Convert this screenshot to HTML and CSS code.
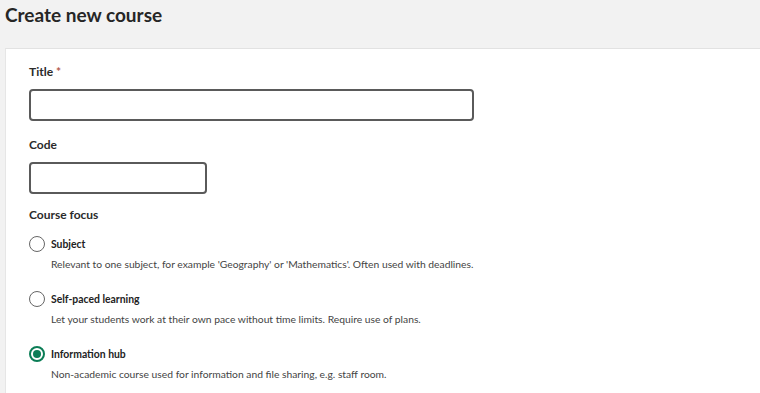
FILE: index.html
```html
<!DOCTYPE html>
<html lang="en">
<head>
    <meta charset="UTF-8">
    <title>Create new course</title>
    <link rel="stylesheet" href="styles.css">
</head>
<body>

<h1 class="page-title">Create new course</h1>

<div class="card">
    <div class="field">
        <label for="title" class="field-label">Title <span class="req">*</span></label>
        <input type="text" id="title" class="input-wide">
    </div>

    <div class="field">
        <label for="code" class="field-label">Code</label>
        <input type="text" id="code" class="input-short">
    </div>

    <div class="field-label focus-label">Course focus</div>

    <div class="radio-list">
        <label class="radio-item">
            <span class="radio"></span>
            <span class="radio-text">
                <span class="radio-title">Subject</span>
                <span class="radio-desc">Relevant to one subject, for example 'Geography' or 'Mathematics'. Often used with deadlines.</span>
            </span>
        </label>
        <label class="radio-item">
            <span class="radio"></span>
            <span class="radio-text">
                <span class="radio-title">Self-paced learning</span>
                <span class="radio-desc">Let your students work at their own pace without time limits. Require use of plans.</span>
            </span>
        </label>
        <label class="radio-item">
            <span class="radio checked"></span>
            <span class="radio-text">
                <span class="radio-title">Information hub</span>
                <span class="radio-desc">Non-academic course used for information and file sharing, e.g. staff room.</span>
            </span>
        </label>
    </div>
</div>

</body>
</html>
```

FILE: styles.css
```css
body {
    font-family: Lato, "Open Sans", sans-serif;
    margin: 0;
    background: #f2f2f2;
    color: #2b2b2b;
    overflow: hidden;
    height: 393px;
}

.page-title {
    font-size: 19px;
    font-weight: 700;
    margin: 0;
    padding: 3px 0 0 5px;
    height: 48px;
    box-sizing: border-box;
    line-height: 24px;
    color: #262626;
}

.card {
    background: white;
    margin-left: 5px;
    margin-right: -20px;
    border-top: 1px solid #e2e2e2;
    border-left: 1px solid #e6e6e6;
    padding: 15px 0 40px 23px;
    min-height: 400px;
}

.field {
    margin-bottom: 16px;
}

.field-label {
    display: block;
    font-size: 12px;
    line-height: 16px;
    font-weight: 700;
    color: #2b2b2b;
    margin-bottom: 9px;
}

.req {
    color: #b2574a;
}

input[type="text"] {
    display: block;
    height: 32px;
    box-sizing: border-box;
    border: 2px solid #5a5a5a;
    border-radius: 4px;
    background: white;
    margin: 0;
}

.input-wide {
    width: 445px;
}

.input-short {
    width: 178px;
}

.focus-label {
    margin-top: -3px;
    margin-bottom: 14px;
}

.radio-list {
    display: flex;
    flex-direction: column;
    gap: 21px;
}

.radio-item {
    display: flex;
    gap: 6px;
}

.radio {
    width: 16px;
    height: 16px;
    border: 1.5px solid #666;
    border-radius: 50%;
    box-sizing: border-box;
    flex-shrink: 0;
    margin-top: -1px;
}

.radio.checked {
    border: 2px solid #0b7d56;
    position: relative;
}

.radio.checked::after {
    content: "";
    position: absolute;
    left: 2px;
    top: 2px;
    width: 8px;
    height: 8px;
    border-radius: 50%;
    background: #0b7d56;
}

.radio-text {
    display: flex;
    flex-direction: column;
    gap: 6px;
}

.radio-title {
    font-size: 10.4px;
    font-weight: 700;
    line-height: 14px;
    color: #222;
}

.radio-desc {
    font-size: 10.3px;
    color: #444;
    line-height: 14px;
}
```
